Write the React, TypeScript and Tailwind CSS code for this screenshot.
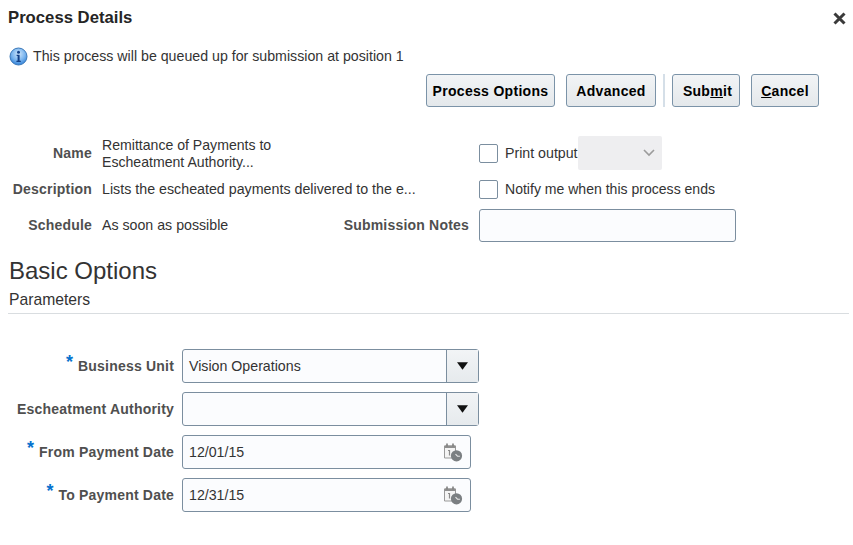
import React from "react";

const font = { fontFamily: '"Liberation Sans", Arial, sans-serif' };

function InfoIcon() {
  return (
    <svg width="19" height="19" viewBox="0 0 19 19" className="shrink-0">
      <defs>
        <radialGradient id="info" cx="50%" cy="35%" r="65%">
          <stop offset="0%" stopColor="#cfe6fb" />
          <stop offset="60%" stopColor="#79b4ee" />
          <stop offset="100%" stopColor="#2f7fd6" />
        </radialGradient>
      </defs>
      <circle cx="9.5" cy="9.5" r="8.5" fill="url(#info)" stroke="#3b78b8" strokeWidth="1" />
      <circle cx="9.5" cy="5.2" r="1.5" fill="#123f86" />
      <path d="M7.6 7.8h3v6h1.2v1.2H7.4v-1.2h1.2V9H7.6z" fill="#123f86" />
    </svg>
  );
}

function CalendarIcon() {
  return (
    <svg width="20" height="20" viewBox="0 0 20 20" className="shrink-0">
      <path d="M1.5 4h11v12h-11z" fill="#f4f4f4" stroke="#9a9a9a" strokeWidth="1" />
      <path d="M1.5 3.5h11v2.5h-11z" fill="#8f8f8f" />
      <path d="M4 1.5v3M10 1.5v3" stroke="#7f7f7f" strokeWidth="1.6" />
      <path d="M5 8.5h1.5v5" stroke="#8a8a8a" strokeWidth="1.2" fill="none" />
      <circle cx="13.5" cy="13.8" r="5.6" fill="#7b7f82" />
      <path d="M12.5 12.2l2 2h2.4" stroke="#e8e8e8" strokeWidth="1.1" fill="none" />
    </svg>
  );
}

function ActionButton({ width, children }: { width: string; children: React.ReactNode }) {
  return (
    <button className={`${width} h-[33px] rounded-[3px] border border-[#7b93a8] bg-gradient-to-b from-[#f2f4f6] to-[#e4e8eb] pt-[2px] text-center text-[14px] font-bold tracking-[0.3px] text-[#000000]`}>
      {children}
    </button>
  );
}

function Label({ children }: { children: React.ReactNode }) {
  return <span className="text-[14px] font-bold tracking-[0.2px] text-[#4f4f4f]">{children}</span>;
}

function Required() {
  return <span className="relative top-[-3px] mr-[5px] text-[18px] leading-none font-bold text-[#0572ce]">*</span>;
}

function ParamRow({ required, label, children, className }: { required?: boolean; label: string; children: React.ReactNode; className: string }) {
  return (
    <div className={`flex items-center ${className}`}>
      <div className="w-[174px] pt-[2px] text-right whitespace-nowrap">
        {required && <Required />}
        <Label>{label}</Label>
      </div>
      <div className="ml-2">{children}</div>
    </div>
  );
}

function SelectField({ value }: { value: string }) {
  return (
    <div className="flex h-[34px] w-[297px] rounded-[3px] border border-[#7b8e9f] bg-[#fbfcfe]">
      <div className="flex-1 pl-[6px] text-[14.2px] leading-[32px] text-[#333333]">{value}</div>
      <div className="flex w-[32px] items-center justify-center border-l border-[#7b8e9f] bg-gradient-to-b from-[#f2f4f6] to-[#e6eaed]">
        <svg width="11" height="8" viewBox="0 0 12 8" className="mr-[1px]">
          <path d="M0 0h12L6 8z" fill="#111111" />
        </svg>
      </div>
    </div>
  );
}

function DateField({ value }: { value: string }) {
  return (
    <div className="flex h-[34px] w-[289px] items-center justify-between rounded-[3px] border border-[#7b8e9f] bg-[#fbfcfe] pr-[7px] pl-[6px] text-[14.2px] text-[#333333]">
      <span className="pt-[1px]">{value}</span>
      <CalendarIcon />
    </div>
  );
}

export default function App() {
  return (
    <div className="h-[545px] w-[853px] overflow-hidden bg-white text-[14.2px] text-[#333333]" style={font}>
      {/* Dialog header */}
      <div className="flex items-start justify-between pt-[9px] pr-[7px] pl-[8px]">
        <h1 className="text-[16.7px] leading-[18px] font-bold text-[#252525]">Process Details</h1>
        <svg width="13" height="13" viewBox="0 0 13 13" className="mt-[3px]">
          <path d="M1.5 1.5l10 10M11.5 1.5l-10 10" stroke="#3a3a3a" strokeWidth="3" />
        </svg>
      </div>

      <div className="mt-[20px] flex h-[19px] items-center gap-[5px] pl-[9px]">
        <InfoIcon />
        <span>This process will be queued up for submission at position 1</span>
      </div>

      {/* Toolbar */}
      <div className="mt-[8px] flex items-center pl-[426px]">
        <ActionButton width="w-[129px]">Process Options</ActionButton>
        <div className="ml-[11px]">
          <ActionButton width="w-[90px]">Advanced</ActionButton>
        </div>
        <div className="ml-[7px] h-[33px] w-[2px] bg-[#d5dfe8]" />
        <div className="ml-[7px]">
          <ActionButton width="w-[68px] pl-[3px]">
            Sub<span className="underline">m</span>it
          </ActionButton>
        </div>
        <div className="ml-[11px]">
          <ActionButton width="w-[68px]">
            <span className="underline">C</span>ancel
          </ActionButton>
        </div>
      </div>

      {/* Process summary */}
      <div className="mt-[29px] grid grid-cols-[92px_377px_auto] items-center leading-[20px]">
        <div className="text-right"><Label>Name</Label></div>
        <div className="h-[34px] pt-[1px] pl-[10px] text-[14.1px] leading-[17px]">
          Remittance of Payments to
          <br />
          Escheatment Authority...
        </div>
        <div className="flex h-[34px] items-center pl-[10px]">
          <div className="h-[19px] w-[19px] rounded-[2px] border border-[#7b8e9f] bg-white" />
          <span className="ml-[7px]">Print output</span>
          <div className="flex h-[34px] w-[84px] items-center justify-end rounded-[2px] bg-[#eeeef0] pr-[7px]">
            <svg width="12" height="8" viewBox="0 0 12 8">
              <path d="M1 1l5 5 5-5" fill="none" stroke="#9b9b9b" strokeWidth="1.6" />
            </svg>
          </div>
        </div>

        <div className="mt-[9px] text-right"><Label>Description</Label></div>
        <div className="mt-[9px] pl-[10px] text-[14.25px] whitespace-nowrap">Lists the escheated payments delivered to the e...</div>
        <div className="mt-[9px] flex h-[20px] items-center pl-[10px]">
          <div className="mt-[1px] h-[19px] w-[19px] rounded-[2px] border border-[#7b8e9f] bg-white" />
          <span className="ml-[7px] text-[14.05px]">Notify me when this process ends</span>
        </div>

        <div className="mt-[10px] pb-[2px] text-right"><Label>Schedule</Label></div>
        <div className="mt-[10px] flex items-center justify-between pb-[2px] pl-[10px]">
          <span>As soon as possible</span>
          <Label>Submission Notes</Label>
        </div>
        <div className="mt-[10px] pl-[10px]">
          <div className="h-[33px] w-[257px] rounded-[3px] border border-[#7b8e9f] bg-[#fbfcfe]" />
        </div>
      </div>

      {/* Basic options */}
      <h2 className="mt-[15px] pl-[9px] text-[24px] leading-[28px] text-[#333333]">Basic Options</h2>
      <div className="mt-[6px] ml-[8px] w-[841px] border-b border-[#d9dde0] pb-[4px] pl-[1px] text-[15.7px] leading-[18px] text-[#333333]">Parameters</div>

      <div className="pt-[35px]">
        <ParamRow required label="Business Unit" className="">
          <SelectField value="Vision Operations" />
        </ParamRow>
        <ParamRow label="Escheatment Authority" className="mt-[9px]">
          <SelectField value="" />
        </ParamRow>
        <ParamRow required label="From Payment Date" className="mt-[9px]">
          <DateField value="12/01/15" />
        </ParamRow>
        <ParamRow required label="To Payment Date" className="mt-[9px]">
          <DateField value="12/31/15" />
        </ParamRow>
      </div>
    </div>
  );
}
